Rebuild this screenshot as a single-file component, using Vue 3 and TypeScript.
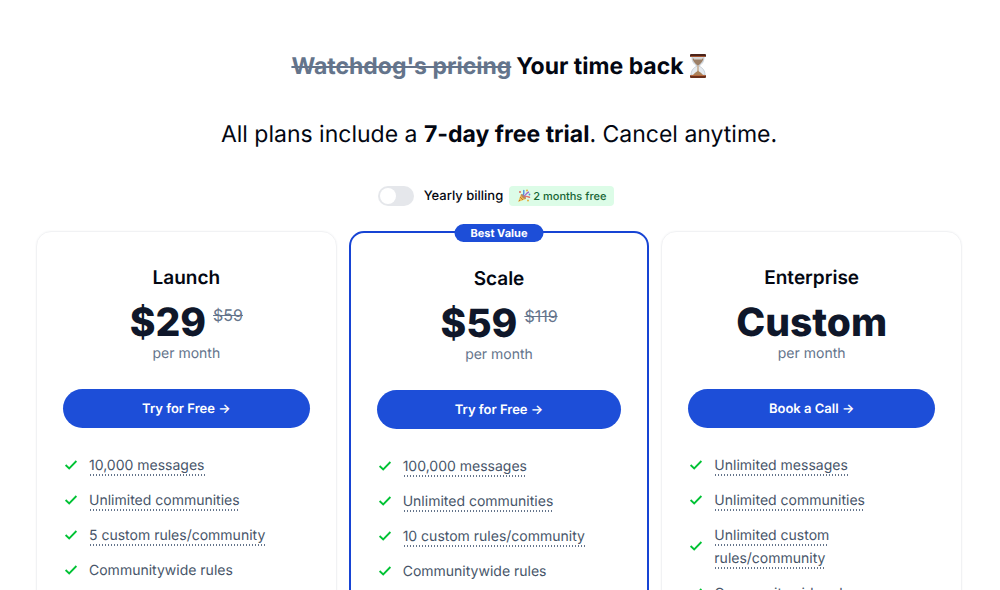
<script setup lang="ts">
import { ref } from 'vue'

interface Feature {
  text: string
  hint: boolean
}

interface Plan {
  name: string
  price: string
  oldPrice?: string
  cta: string
  best?: boolean
  features: Feature[]
}

const yearly = ref(false)

const plans: Plan[] = [
  {
    name: 'Launch',
    price: '$29',
    oldPrice: '$59',
    cta: 'Try for Free',
    features: [
      { text: '10,000 messages', hint: true },
      { text: 'Unlimited communities', hint: true },
      { text: '5 custom rules/community', hint: true },
      { text: 'Communitywide rules', hint: false },
    ],
  },
  {
    name: 'Scale',
    price: '$59',
    oldPrice: '$119',
    cta: 'Try for Free',
    best: true,
    features: [
      { text: '100,000 messages', hint: true },
      { text: 'Unlimited communities', hint: true },
      { text: '10 custom rules/community', hint: true },
      { text: 'Communitywide rules', hint: false },
    ],
  },
  {
    name: 'Enterprise',
    price: 'Custom',
    cta: 'Book a Call',
    features: [
      { text: 'Unlimited messages', hint: true },
      { text: 'Unlimited communities', hint: true },
      { text: 'Unlimited custom rules/community', hint: true },
      { text: 'Communitywide rules', hint: false },
    ],
  },
]
</script>

<template>
  <main class="page">
    <h1 class="title">
      <s>Watchdog's pricing</s>
      <span>Your time back</span>
      <svg class="hourglass" viewBox="0 0 18 24" aria-hidden="true">
        <path d="M3 3C3 8 5 10 8 12C4 14 2 17 2 21H16C16 17 14 14 10 12C13 10 15 8 15 3Z" fill="#e6ebf0" stroke="#b4bec9" stroke-width="0.7" />
        <path d="M3.6 4.5H14.4C14 8 11 10 9 12C7 10 4 8 3.6 4.5Z" fill="#9c8068" />
        <path d="M5 4H13V5.5H5Z" fill="#d9d3cd" />
        <path d="M9 12V17" stroke="#b58a5c" stroke-width="1" />
        <path d="M4 21C5 19 8 18 9 16.5C10 18 13 19 14 21Z" fill="#ab835b" />
        <rect x="1" y="0" width="16" height="3" rx="1" fill="#4b231a" />
        <rect x="2" y="2" width="14" height="1" fill="#a4532d" />
        <rect x="1" y="21" width="16" height="3" rx="1" fill="#6b301b" />
        <rect x="2" y="21" width="14" height="1" fill="#b8683d" />
      </svg>
    </h1>
    <p class="subtitle">All plans include a <strong>7-day free trial</strong>. Cancel anytime.</p>

    <div class="billing">
      <label class="switch">
        <input v-model="yearly" type="checkbox" />
        <span>Yearly billing</span>
      </label>
      <span class="tag">
        <svg class="party" viewBox="0 0 14 14" aria-hidden="true">
          <path d="M1 13L4 5L9 10Z" fill="#edbd55" />
          <path d="M3 8L6 11M2 11L3 12" stroke="#c4782c" stroke-width="1" />
          <ellipse cx="6.5" cy="7.5" rx="1.3" ry="3.2" transform="rotate(-45 6.5 7.5)" fill="#b98a5c" />
          <path d="M6 6C8 4 6 3 7 1" fill="none" stroke="#4b8fe0" stroke-width="1.4" />
          <path d="M8 8C10 6 11 9 13 8" fill="none" stroke="#e0736b" stroke-width="1.4" />
          <path d="M7 7C9 6 9 4 12 3" fill="none" stroke="#a66cc8" stroke-width="1.4" />
          <circle cx="3" cy="3" r="0.9" fill="#e0574f" />
          <circle cx="10" cy="1.5" r="0.9" fill="#e5a72e" />
          <circle cx="12.5" cy="5.5" r="0.9" fill="#4b8fe0" />
          <circle cx="11" cy="11.5" r="0.9" fill="#e5a72e" />
        </svg>
        2 months free
      </span>
    </div>

    <section class="plans">
      <article v-for="plan in plans" :key="plan.name" class="card" :class="{ best: plan.best }">
        <span v-if="plan.best" class="badge">Best Value</span>
        <h2 class="name">{{ plan.name }}</h2>
        <div class="price">
          <span class="amount">{{ plan.price }}</span>
          <s v-if="plan.oldPrice" class="old">{{ plan.oldPrice }}</s>
        </div>
        <p class="period">per month</p>
        <button type="button" class="cta">{{ plan.cta }} →</button>
        <ul class="features">
          <li v-for="feature in plan.features" :key="feature.text">
            <svg class="check" viewBox="0 0 16 16" aria-hidden="true">
              <path d="M2.6 7L6.2 10.4L13.4 3" fill="none" stroke="#00c234" stroke-width="1.8" />
            </svg>
            <div class="label">
              <span :class="{ hint: feature.hint }">{{ feature.text }}</span>
            </div>
          </li>
        </ul>
      </article>
    </section>
  </main>
</template>

<style>
body {
  margin: 0;
  background: #fff;
}
</style>

<style scoped>
.page {
  box-sizing: border-box;
  height: 100vh;
  overflow: hidden;
  padding: 48px 38px 0 36px;
  font-family: Inter, 'Liberation Sans', sans-serif;
  font-size: 14px;
  line-height: 23px;
  color: #030712;
  text-rendering: geometricPrecision;
}

.title {
  display: flex;
  justify-content: center;
  align-items: center;
  gap: 5px;
  margin: 0;
  font-size: 23px;
  font-weight: 700;
  line-height: 36px;
}

.title s {
  color: #64748b;
  text-decoration-thickness: 2px;
}

.hourglass {
  width: 18px;
  height: 24px;
}

.subtitle {
  margin: 32px 0 0;
  font-size: 23px;
  line-height: 36px;
  text-align: center;
}

.subtitle strong {
  font-weight: 700;
}

.billing {
  display: flex;
  justify-content: center;
  align-items: center;
  gap: 6px;
  margin-top: 34px;
  padding-right: 6px;
  font-size: 13px;
  font-weight: 500;
  line-height: 20px;
}

.switch {
  display: flex;
  align-items: center;
  gap: 10px;
}

.switch input {
  appearance: none;
  display: flex;
  box-sizing: border-box;
  width: 36px;
  height: 20px;
  margin: 0;
  padding: 2px;
  border-radius: 10px;
  background: #e5e7eb;
}

.switch input::before {
  content: '';
  width: 16px;
  height: 16px;
  border-radius: 50%;
  background: #fff;
}

.switch input:checked {
  justify-content: flex-end;
  background: #1d4ed8;
}

.tag {
  display: flex;
  align-items: center;
  gap: 2px;
  padding: 0 8px;
  border-radius: 4px;
  background: #dcfce7;
  color: #166534;
  font-size: 11px;
}

.party {
  width: 14px;
  height: 14px;
}

.plans {
  display: grid;
  grid-template-columns: repeat(3, minmax(0, 1fr));
  gap: 12px;
  margin-top: 25px;
}

.card {
  position: relative;
  min-width: 0;
  padding: 33px 26px;
  border: 1px solid #f1f2f4;
  border-radius: 15px;
  box-shadow: 0 0 2px #f1f2f4;
  text-align: center;
}

.card.best {
  border: 2px solid #1744d4;
  box-shadow: none;
}

.badge {
  position: absolute;
  top: -9px;
  left: 50%;
  transform: translateX(-50%);
  padding: 0 16px;
  border-radius: 9px;
  background: #1d4ed8;
  color: #fff;
  font-size: 11px;
  font-weight: 700;
  line-height: 18px;
  white-space: nowrap;
}

.name {
  margin: 0;
  font-size: 19px;
  font-weight: 600;
  line-height: 26px;
}

.price {
  display: flex;
  justify-content: center;
  gap: 7px;
  margin-top: 13px;
  line-height: 38px;
}

.amount {
  color: #0f172a;
  font-size: 39px;
  font-weight: 800;
}

.old {
  color: #64748b;
  font-size: 16px;
  line-height: 22px;
}

.period {
  margin: 0;
  color: #64748b;
}

.cta {
  display: block;
  width: 100%;
  margin: 24px 0 26px;
  padding: 1px 0 0;
  border: 0;
  border-radius: 20px;
  background: #1d4ed8;
  color: #fff;
  font: 600 13px/38px Inter, 'Liberation Sans', sans-serif;
  text-rendering: inherit;
  cursor: pointer;
}

.features {
  display: grid;
  gap: 12px;
  margin: 0;
  padding: 0;
  list-style: none;
  color: #475569;
  text-align: left;
}

.features li {
  display: flex;
  align-items: center;
  gap: 10px;
}

.check {
  flex: none;
  width: 16px;
  height: 16px;
}

.label {
  min-width: 0;
}

.hint {
  padding-bottom: 2px;
  background: radial-gradient(circle, #64748b 1px, transparent 1px) left bottom / 3px 2px repeat-x;
  box-decoration-break: clone;
  -webkit-box-decoration-break: clone;
}
</style>
